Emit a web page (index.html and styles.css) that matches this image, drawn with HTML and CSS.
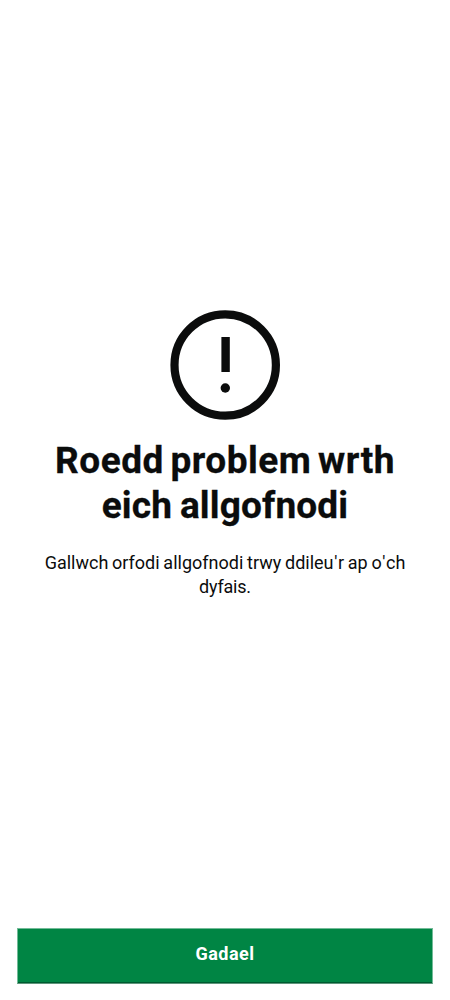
FILE: index.html
```html
<!DOCTYPE html>
<html lang="cy">
<head>
<meta charset="utf-8">
<meta name="viewport" content="width=device-width, initial-scale=1">
<title>Allgofnodi</title>
<link rel="stylesheet" href="styles.css">
</head>
<body>
<div class="screen">
  <main class="message">
    <svg class="message-icon" viewBox="0 0 110 110" aria-hidden="true">
      <circle cx="55.2" cy="55" r="50.7" fill="none" stroke="currentColor" stroke-width="8.2"/>
      <rect x="51.4" y="27" width="8.4" height="35" fill="currentColor"/>
      <circle cx="55.3" cy="78" r="4.7" fill="currentColor"/>
    </svg>
    <h1 class="title"><span class="title-line title-first">Roedd problem wrth</span> <span class="title-line title-second">eich allgofnodi</span></h1>
    <p class="body-text"><span class="body-line">Gallwch orfodi allgofnodi trwy ddileu<span class="apostrophe">'</span>r ap o<span class="apostrophe">'</span>ch</span> <span class="body-line body-last">dyfais.</span></p>
  </main>
  <button class="button" type="button"><span class="button-label">Gadael</span></button>
</div>
</body>
</html>
```
FILE: styles.css
```css
* { box-sizing: border-box; }
body {
  margin: 0;
  background: #fff;
  color: #0b0c0c;
  font-family: Roboto, "Liberation Sans", sans-serif;
}
.screen {
  height: 1000px;
  padding: 0 17px 16px;
  display: flex;
  flex-direction: column;
}
.message {
  flex: 1;
  padding-top: 310px;
  display: flex;
  flex-direction: column;
  align-items: center;
}
.message-icon { display: block; width: 110px; height: 110px; }
.title {
  margin: 18px 0 0;
  font-size: 37px;
  line-height: 45px;
  font-weight: 700;
  text-align: center;
}
.title-line, .body-line { display: block; white-space: nowrap; }
.title-line { -webkit-text-stroke: 0.3px currentColor; }
.title-first { letter-spacing: 0.5px; word-spacing: -3px; }
.title-second { letter-spacing: 0.15px; word-spacing: -1.5px; }
.body-text {
  margin: 22.5px 0 0;
  font-size: 18px;
  line-height: 24.5px;
  text-align: center;
}
.body-line { word-spacing: -0.7px; }
.body-last { letter-spacing: -0.2px; }
.apostrophe { margin: 0 0.6px; }
.button {
  width: 416px;
  height: 56px;
  padding: 0 0 4px;
  border: 1px solid #73bb98;
  border-bottom-color: #5f967b;
  background: #008544;
  background-clip: padding-box;
  box-shadow: inset 0 -1px #005a30;
  color: #fff;
  font: 700 18px/24px Roboto, "Liberation Sans", sans-serif;
  letter-spacing: 0.45px;
}
```
